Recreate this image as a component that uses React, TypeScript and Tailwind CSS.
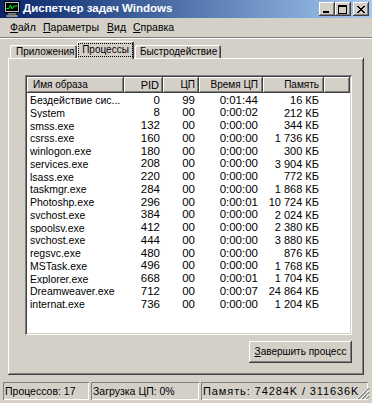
import React from 'react';

const rows = [
  ['Бездействие сис...', '0', '99', '0:01:44', '16 КБ'],
  ['System', '8', '00', '0:00:02', '212 КБ'],
  ['smss.exe', '132', '00', '0:00:00', '344 КБ'],
  ['csrss.exe', '160', '00', '0:00:00', '1 736 КБ'],
  ['winlogon.exe', '180', '00', '0:00:00', '300 КБ'],
  ['services.exe', '208', '00', '0:00:00', '3 904 КБ'],
  ['lsass.exe', '220', '00', '0:00:00', '772 КБ'],
  ['taskmgr.exe', '284', '00', '0:00:00', '1 868 КБ'],
  ['Photoshp.exe', '296', '00', '0:00:01', '10 724 КБ'],
  ['svchost.exe', '384', '00', '0:00:00', '2 024 КБ'],
  ['spoolsv.exe', '412', '00', '0:00:00', '2 380 КБ'],
  ['svchost.exe', '444', '00', '0:00:00', '3 880 КБ'],
  ['regsvc.exe', '480', '00', '0:00:00', '876 КБ'],
  ['MSTask.exe', '496', '00', '0:00:00', '1 768 КБ'],
  ['Explorer.exe', '668', '00', '0:00:01', '1 704 КБ'],
  ['Dreamweaver.exe', '712', '00', '0:00:07', '24 864 КБ'],
  ['internat.exe', '736', '00', '0:00:00', '1 204 КБ'],
];

const raised =
  'shadow-[inset_-1px_-1px_#404040,inset_1px_1px_#ffffff,inset_-2px_-2px_#808080,inset_2px_2px_#d4d0c8]';
const headerCell =
  'h-full flex items-center shadow-[inset_-1px_-1px_#404040,inset_1px_1px_#ffffff,inset_-2px_-2px_#808080]';
const tabEdge = 'rounded-t-[2px] bg-[#d4d0c8] shadow-[inset_1px_1px_#ffffff,inset_-1px_0_#404040,inset_-2px_0_#808080]';
const statusPanel = 'flex items-center shadow-[inset_1px_1px_#808080,inset_-1px_-1px_#ffffff]';

const TaskIcon = () => (
  <svg width="16" height="16" viewBox="0 0 16 16">
    <rect x="0.5" y="0.5" width="15" height="11" fill="#c0c0c0" stroke="#000" />
    <rect x="2" y="2" width="12" height="8" fill="#000" />
    <polyline points="2.5,7.5 5,7.5 6.5,4 8,8 10,5 13.5,5" fill="none" stroke="#00ff00" strokeWidth="1" />
    <rect x="4" y="12" width="8" height="2" fill="#808080" />
    <rect x="2" y="14" width="12" height="2" fill="#c0c0c0" stroke="#000" strokeWidth="0.5" />
  </svg>
);

const CaptionButton = ({ kind, className = '' }: { kind: 'min' | 'max' | 'close'; className?: string }) => (
  <div className={`w-[16px] h-[14px] bg-[#d4d0c8] flex items-center justify-center ${raised} ${className}`}>
    <svg width="10" height="9" viewBox="0 0 10 9">
      {kind === 'min' && <rect x="1" y="6" width="6" height="2" fill="#000" />}
      {kind === 'max' && (
        <>
          <rect x="0.5" y="0.5" width="8" height="8" fill="none" stroke="#000" />
          <rect x="0" y="0" width="9" height="2" fill="#000" />
        </>
      )}
      {kind === 'close' && (
        <path d="M1 1 L8 8 M2 1 L9 8 M8 1 L1 8 M9 1 L2 8" stroke="#000" strokeWidth="1" />
      )}
    </svg>
  </div>
);

const U = ({ children }: { children: React.ReactNode }) => <span className="underline underline-offset-[1px]">{children}</span>;

export default function App() {
  return (
    <div className="w-[372px] h-[403px] bg-[#d4d0c8] flex flex-col overflow-hidden text-[10px] leading-none text-black font-['Liberation_Sans',sans-serif]">
      {/* title bar */}
      <div className="h-[18px] shrink-0 bg-linear-to-r from-[#0a246a] to-[#a6caf0] flex items-center pl-[4px] pr-[3px]">
        <TaskIcon />
        <span className="ml-[3px] font-bold text-white text-[11.5px]">Диспетчер задач Windows</span>
        <div className="ml-auto flex items-center">
          <CaptionButton kind="min" />
          <CaptionButton kind="max" />
          <CaptionButton kind="close" className="ml-[2px]" />
        </div>
      </div>

      {/* menu */}
      <div className="h-[19px] shrink-0 flex items-center pl-[10px] text-[10.5px]">
        <span className="w-[33px]"><U>Ф</U>айл</span>
        <span className="w-[64px]"><U>П</U>араметры</span>
        <span className="w-[26px]"><U>В</U>ид</span>
        <span><U>С</U>правка</span>
      </div>
      <div className="h-[2px] shrink-0 border-t border-[#808080] border-b border-b-white" />

      {/* tabs */}
      <div className="h-[17px] mt-[2px] shrink-0 flex items-end pl-[10px] relative z-10">
        <div className={`h-[13px] w-[67px] pl-[6px] flex items-center ${tabEdge}`}>Приложения</div>
        <div className={`h-[18px] w-[57px] -mb-[1px] flex items-center justify-center ${tabEdge}`}>
          <span className="border border-dotted border-black px-[3px] py-[1px]">Процессы</span>
        </div>
        <div className={`h-[13px] w-[86px] ml-[1px] pl-[5px] flex items-center ${tabEdge}`}>Быстродействие</div>
      </div>

      {/* tab page */}
      <div className="ml-[8px] w-[356px] h-[317px] shrink-0 pt-[17px] pl-[17px] shadow-[inset_-1px_-1px_#404040,inset_1px_1px_#ffffff,inset_-2px_-2px_#808080]">
        <div className="w-[327px] flex flex-col">
          <div className="h-[260px] bg-white p-[2px] shadow-[inset_1px_1px_#808080,inset_-1px_-1px_#ffffff,inset_2px_2px_#404040,inset_-2px_-2px_#d4d0c8]">
            <div className="h-[16px] flex bg-[#d4d0c8]">
              <div className={`${headerCell} w-[97px] pl-[6px]`}>Имя образа</div>
              <div className={`${headerCell} w-[39px] justify-end pr-[4px] text-[11px]`}>PID</div>
              <div className={`${headerCell} w-[36px] justify-end pr-[4px]`}>ЦП</div>
              <div className={`${headerCell} w-[64px] justify-end pr-[5px]`}>Время ЦП</div>
              <div className={`${headerCell} w-[61px] justify-end pr-[5px]`}>Память</div>
              <div className={`${headerCell} flex-1`} />
            </div>
            <div className="pt-[1px]">
              {rows.map((r, i) => (
                <div key={i} className="h-[12.75px] flex items-center whitespace-nowrap">
                  <div className="w-[97px] pl-[3px] overflow-hidden text-[10.5px]">{r[0]}</div>
                  <div className="w-[39px] text-right pr-[3px] text-[11.5px]">{r[1]}</div>
                  <div className="w-[36px] text-right pr-[4px] text-[11.5px]">{r[2]}</div>
                  <div className="w-[64px] text-right pr-[5px] text-[11.5px]">{r[3]}</div>
                  <div className="w-[61px] text-right pr-[5px] text-[11px]">{r[4]}</div>
                </div>
              ))}
            </div>
          </div>
          <div className={`self-end mt-[6px] w-[103px] h-[22px] flex items-center justify-center bg-[#d4d0c8] ${raised}`}>
            <span><U>З</U>авершить процесс</span>
          </div>
        </div>
      </div>

      {/* status bar */}
      <div className="h-[18px] mt-[7px] shrink-0 flex items-stretch pl-[3px] relative text-[10.5px]">
        <div className={`w-[86px] pl-[2px] ${statusPanel}`}>Процессов: 17</div>
        <div className={`w-[108px] ml-[2px] pl-[2px] ${statusPanel}`}>Загрузка ЦП: 0%</div>
        <div className={`w-[167px] ml-[2px] pl-[2px] overflow-hidden whitespace-nowrap text-[11px] tracking-[0.9px] ${statusPanel}`}>
          Память: 74284K / 311636K
        </div>
        <svg className="absolute right-[2px] bottom-0" width="13" height="13" viewBox="0 0 13 13">
          <path d="M12 1 L1 12 M12 5 L5 12 M12 9 L9 12" stroke="#808080" strokeWidth="1.5" />
          <path d="M12 0 L0 12 M12 4 L4 12 M12 8 L8 12" stroke="#ffffff" strokeWidth="0.8" />
        </svg>
      </div>
    </div>
  );
}
